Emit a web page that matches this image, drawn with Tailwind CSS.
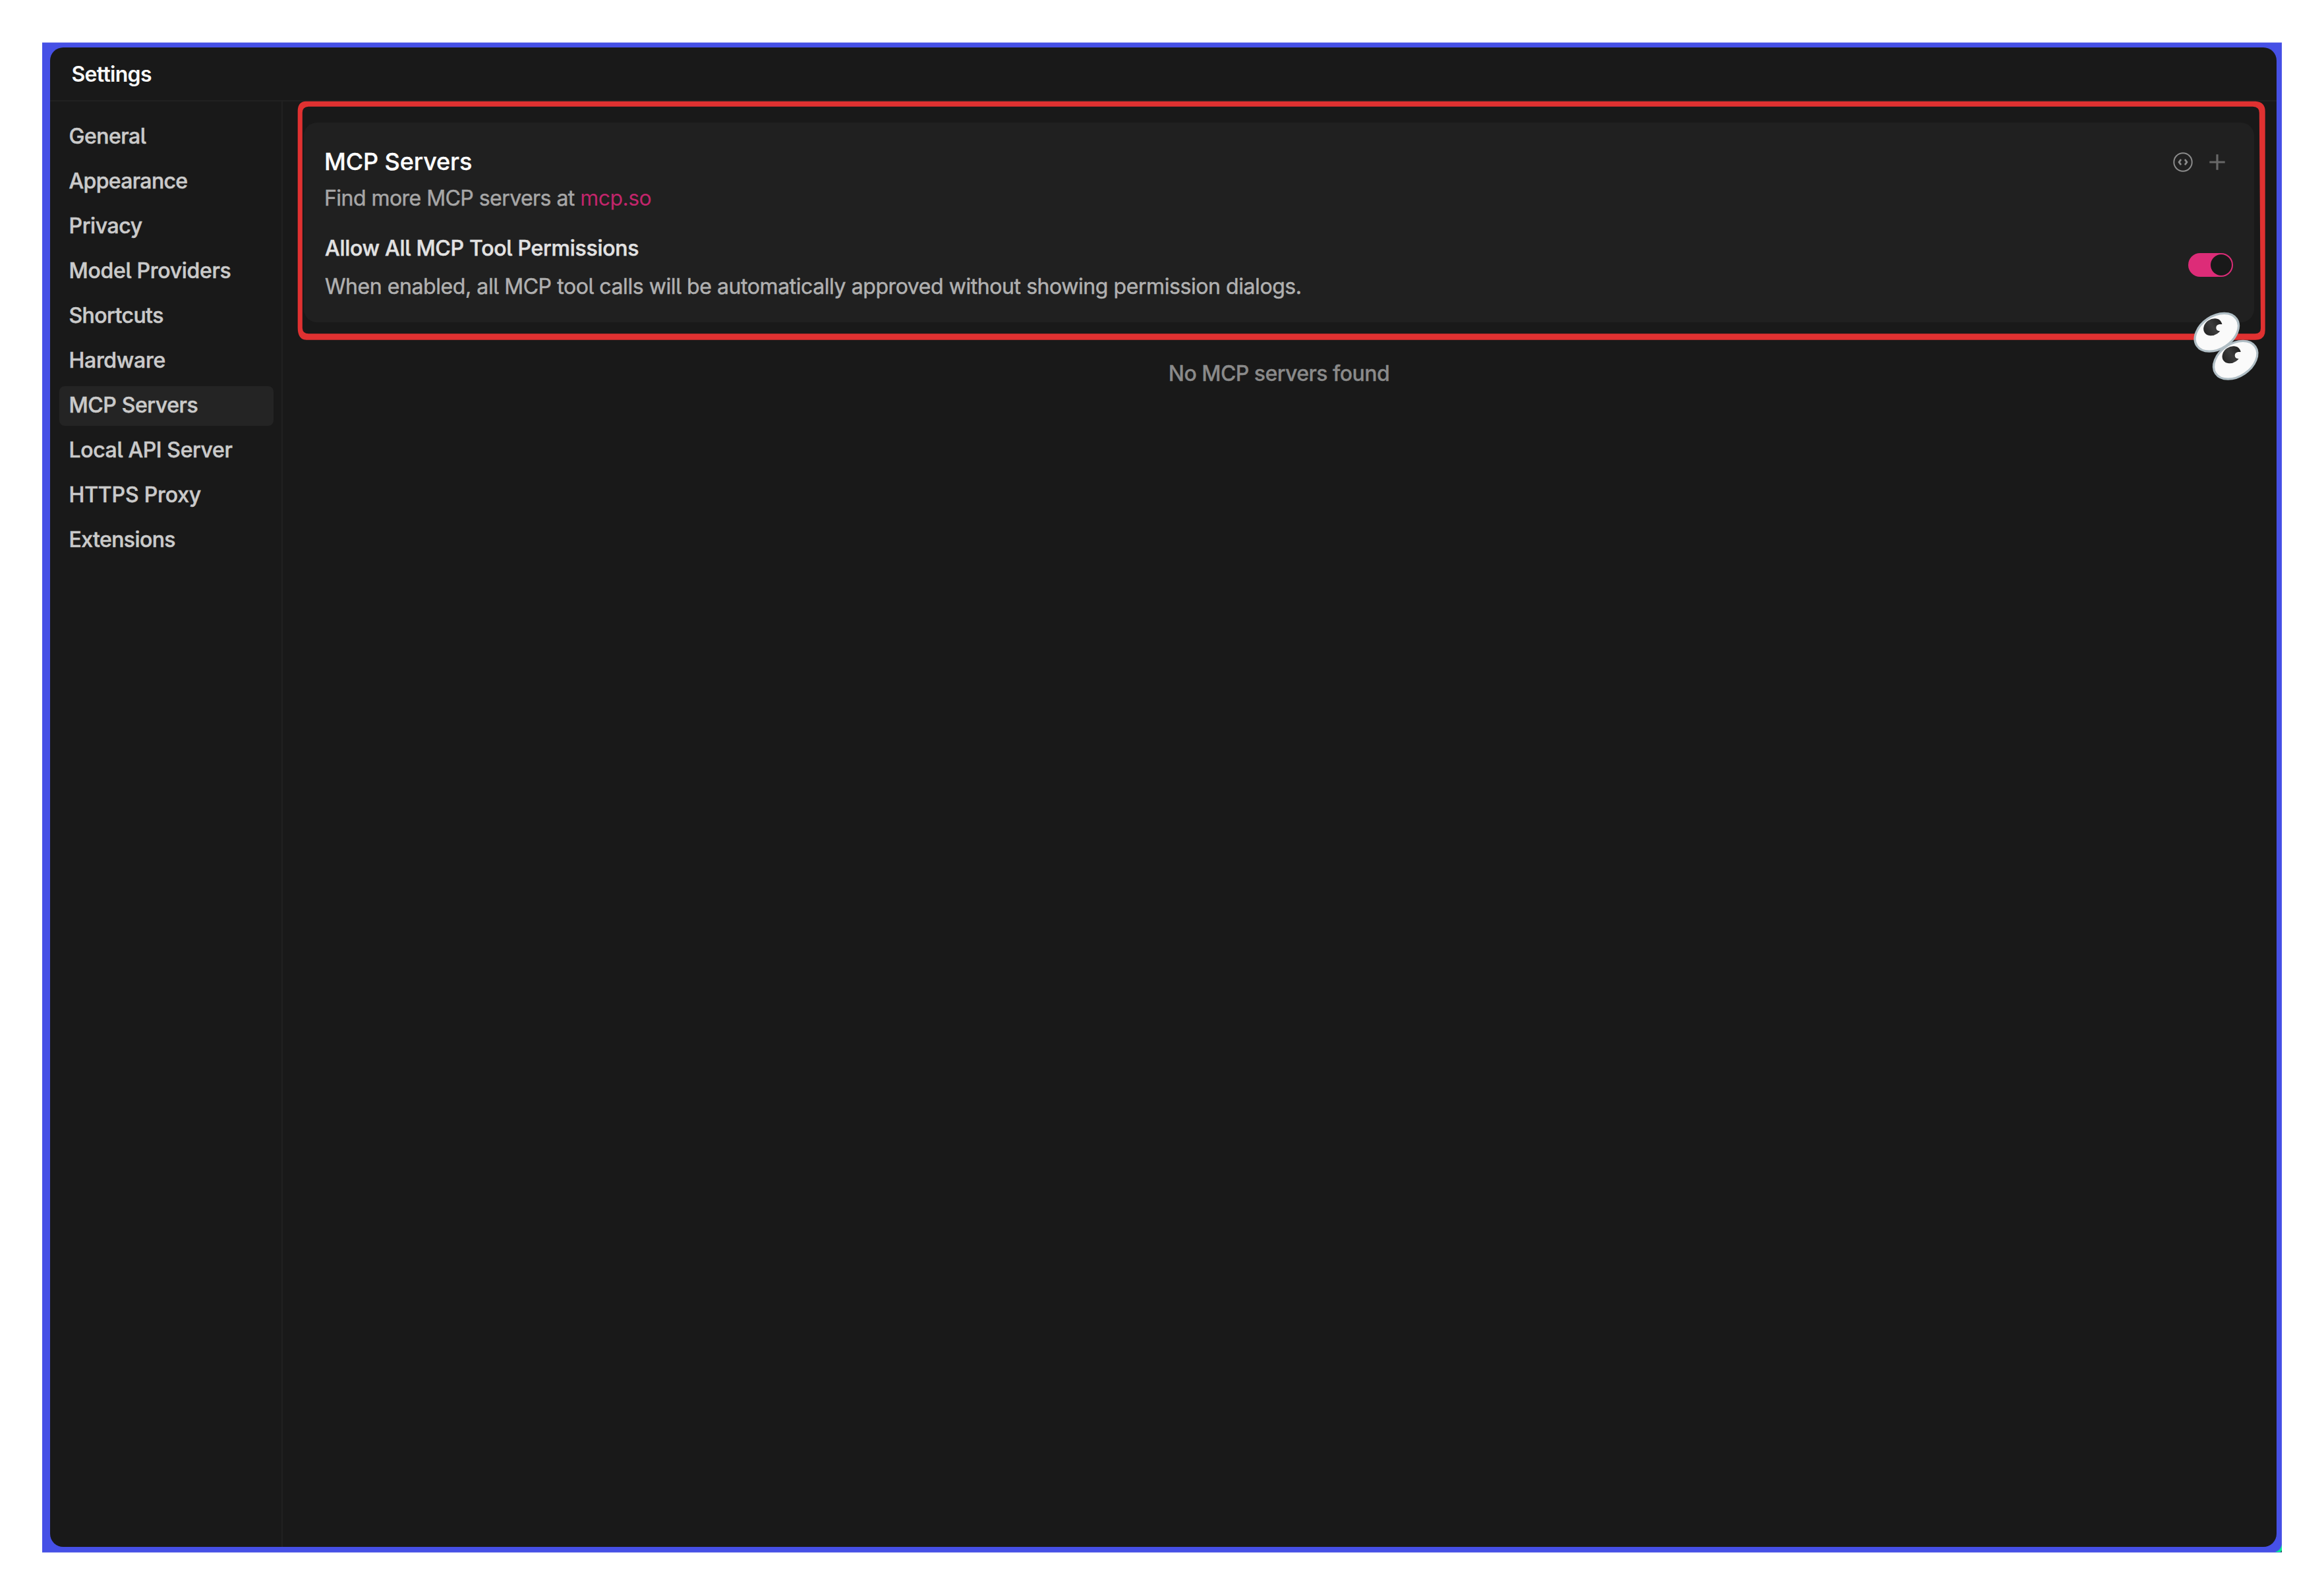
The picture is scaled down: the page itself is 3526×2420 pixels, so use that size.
<!DOCTYPE html>
<html lang="en">
  <head>
    <meta charset="UTF-8" />
    <meta name="viewport" content="width=device-width, initial-scale=1.0" />
    <title>Settings - MCP Servers</title>
    <script src="https://cdn.jsdelivr.net/npm/@tailwindcss/browser@4"></script>
  </head>
  <body class="relative w-[3526px] h-[2420px] bg-white overflow-hidden pl-16 pt-16 font-['Inter',sans-serif] text-[32px] leading-12">
    <!-- desktop behind the window -->
    <div class="relative w-[3398px] h-[2292px] bg-[#4650e6] border-y border-[#a9adf2] pl-[11.5px] pt-[7px]">
      <svg class="absolute right-0 bottom-0 w-3 h-3" viewBox="0 0 12 12">
        <path d="M12 1V12H2Q10 9 12 1Z" fill="#00e998" />
        <path d="M12 9V12H10Z" fill="#173b3a" />
      </svg>

      <!-- window -->
      <div class="flex flex-col w-[3378.5px] h-[2275px] bg-[#191919] rounded-[20px] overflow-hidden">
        <header class="flex items-center h-[82px] pl-[33px] pt-[2px] border-b-2 border-[#212121] text-[#fafafa] font-semibold tracking-[-0.7px]">
          Settings
        </header>

        <div class="flex flex-1">
          <nav class="flex flex-col gap-2 w-[353.5px] pt-6 pl-[14px] pr-3 border-r-2 border-[#212121] text-[#cacaca] font-medium [-webkit-text-stroke:0.5px]">
            <a class="h-[60px] pl-[15px] pt-[5px] rounded-lg tracking-[-0.5px]">Genera<span class="[font-feature-settings:'cv05']">l</span></a>
            <a class="h-[60px] pl-[15px] pt-[5px] rounded-lg tracking-[-0.65px]">Appearance</a>
            <a class="h-[60px] pl-[15px] pt-[5px] rounded-lg tracking-[-0.4px]">Privacy</a>
            <a class="h-[60px] pl-[15px] pt-[5px] rounded-lg tracking-[-0.3px]">Mode<span class="[font-feature-settings:'cv05']">l</span> Providers</a>
            <a class="h-[60px] pl-[15px] pt-[5px] rounded-lg tracking-[-0.55px]">Shortcuts</a>
            <a class="h-[60px] pl-[15px] pt-[5px] rounded-lg tracking-[-0.3px]">Hardware</a>
            <a class="h-[60px] pl-[15px] pt-[5px] rounded-lg tracking-[-0.4px] bg-[#242424]">MCP Servers</a>
            <a class="h-[60px] pl-[15px] pt-[5px] rounded-lg tracking-[-0.37px]">Loca<span class="[font-feature-settings:'cv05']">l</span> API Server</a>
            <a class="h-[60px] pl-[15px] pt-[5px] rounded-lg tracking-[-0.18px]">HTTPS Proxy</a>
            <a class="h-[60px] pl-[15px] pt-[5px] rounded-lg tracking-[-0.6px]">Extensions</a>
          </nav>

          <main class="flex-1 pt-8 pl-8 pr-[34px]">
            <section class="h-[303px] pt-[35px] pl-[31px] pr-8 bg-[#202020] rounded-[20px]">
              <div class="flex justify-between">
                <h1 class="text-4xl/12 font-medium text-white tracking-[-0.1px] [-webkit-text-stroke:0.3px]">MCP Servers</h1>
                <div class="flex items-center gap-5 pt-px pr-2">
                  <svg class="w-8 h-8" viewBox="0 0 32 32" fill="none" stroke="#8b8b8b" stroke-width="2" stroke-linecap="round" stroke-linejoin="round">
                    <circle cx="16" cy="16" r="13.7" />
                    <path d="M12.4 12.8L10 16L12.4 19.2M19.6 12.8L22 16L19.6 19.2" stroke-width="2.8" />
                  </svg>
                  <svg class="w-8 h-8" viewBox="0 0 32 32" stroke="#686868" stroke-width="3.2">
                    <path d="M16 4.3V27.7M4.3 16H27.7" />
                  </svg>
                </div>
              </div>
              <p class="mt-2 text-[#a6a6a6] tracking-[-0.54px] [-webkit-text-stroke:0.5px]">Find more MCP servers at <a class="text-[#c2256b] [-webkit-text-stroke:0px]">mcp.so</a></p>

              <div class="flex items-center justify-between mt-7">
                <div class="pl-px">
                  <h2 class="font-medium text-[#e2e2e2] tracking-[-0.27px] [-webkit-text-stroke:0.5px]">Allow Al<span class="[font-feature-settings:'cv05']">l</span> MCP Too<span class="[font-feature-settings:'cv05']">l</span> Permissions</h2>
                  <p class="mt-[10px] text-[#b0b0b0] tracking-[-0.43px] [-webkit-text-stroke:0.5px]">When enabled, al<span class="[font-feature-settings:'cv05']">l</span> MCP too<span class="[font-feature-settings:'cv05']">l</span> calls wil<span class="[font-feature-settings:'cv05']">l</span> be automatically approved without showing permission dialogs.</p>
                </div>
                <button class="flex items-center justify-end w-[68px] h-9 mb-2 pr-[2px] rounded-full bg-[#dd2c78]">
                  <span class="size-8 rounded-full bg-[#191919]"></span>
                </button>
              </div>
            </section>

            <p class="mt-[54px] text-center font-medium text-[#8a8a8a] tracking-[-0.55px] [-webkit-text-stroke:0.3px]">No MCP servers found</p>
          </main>
        </div>
      </div>
    </div>

    <!-- highlight frame and eyes drawn over the window -->
    <svg class="absolute left-0 top-0 w-[3526px] h-[2420px] pointer-events-none" viewBox="0 0 3526 2420">
      <path fill="#e03131" fill-rule="evenodd" d="M464 153.7H3422Q3436.7 154.5 3436.7 169V501Q3436.7 515.8 3422 515.8H465Q451.7 515.8 451.7 497V168Q452 154 464 153.7ZM468 161.8Q458.8 162 458.8 171V498Q459.4 506.3 468 506.3H3421Q3430 506.5 3430 498L3427.8 171Q3427.8 162 3418 161.8Z" />
      <defs>
        <linearGradient id="pupil" x1="0" y1="0" x2="1" y2="0">
          <stop offset="0" stop-color="#242424" />
          <stop offset="0.5" stop-color="#3c3c3c" />
          <stop offset="1" stop-color="#222222" />
        </linearGradient>
        <g id="eye">
          <ellipse rx="36.3" ry="24.8" transform="rotate(-34)" fill="#fafafa" stroke="#b0bec5" stroke-width="3.3" />
          <ellipse cx="-6" cy="-8" rx="15" ry="12" transform="rotate(-34 -6 -8)" fill="url(#pupil)" />
          <path d="M9 -12.4H4Q-1 -11.5 -1 -7T4 -2L9 0Z" fill="#fafafa" />
        </g>
      </defs>
      <use href="#eye" x="3363.3" y="504.3" />
      <use href="#eye" x="3391.7" y="546.3" />
    </svg>
  </body>
</html>
